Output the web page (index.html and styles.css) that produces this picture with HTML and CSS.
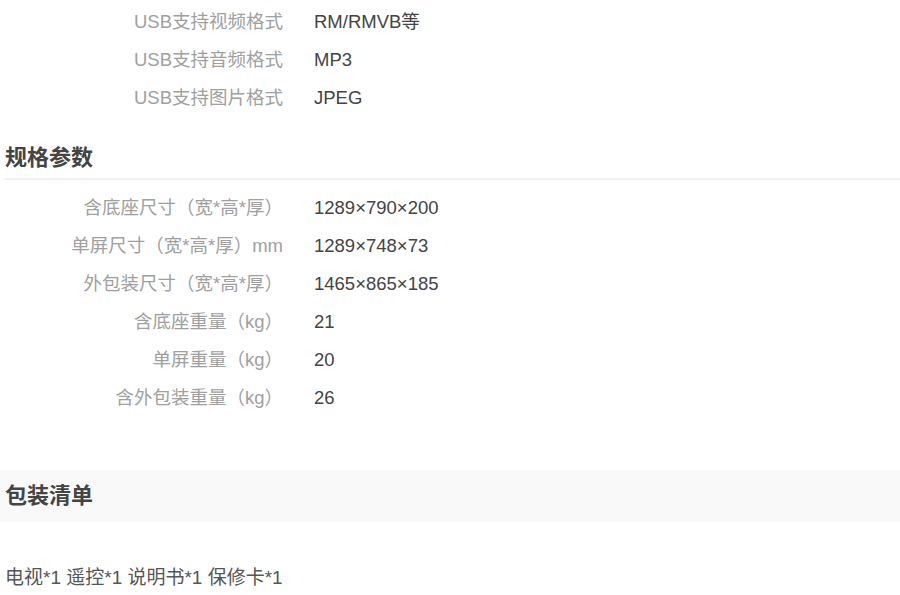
FILE: index.html
```html
<!DOCTYPE html>
<html>
<head lang="zh-CN">
    <meta charset="UTF-8">
    <title>规格参数</title>
    <link rel="stylesheet" href="styles.css">
</head>
<body>
<div class="spec">
    <dl class="rows first">
        <dt>USB支持视频格式</dt><dd>RM/RMVB等</dd>
        <dt>USB支持音频格式</dt><dd>MP3</dd>
        <dt>USB支持图片格式</dt><dd>JPEG</dd>
    </dl>
    <h3 class="title">规格参数</h3>
    <dl class="rows">
        <dt>含底座尺寸（宽*高*厚）</dt><dd>1289×790×200</dd>
        <dt>单屏尺寸（宽*高*厚）mm</dt><dd>1289×748×73</dd>
        <dt>外包装尺寸（宽*高*厚）</dt><dd>1465×865×185</dd>
        <dt>含底座重量（kg）</dt><dd>21</dd>
        <dt>单屏重量（kg）</dt><dd>20</dd>
        <dt>含外包装重量（kg）</dt><dd>26</dd>
    </dl>
    <h3 class="band">包装清单</h3>
    <p class="list">电视*1 遥控*1 说明书*1 保修卡*1</p>
</div>
</body>
</html>
```

FILE: styles.css
```css
*{
    margin: 0;
    padding: 0;
}
body{
    background: #fff;
    font-family: "Liberation Sans", "Noto Sans CJK SC", sans-serif;
    font-size: 18.5px;
}
.rows{
    display: grid;
    grid-template-columns: 283px auto;
    column-gap: 31px;
    line-height: 38px;
    padding-top: 9px;
}
.rows.first{
    padding-top: 3px;
}
.rows dt{
    text-align: right;
    color: #a0a0a0;
    white-space: nowrap;
}
.rows dd{
    color: #444;
}
.title{
    margin: 21px 0 0 5px;
    height: 40px;
    line-height: 40px;
    font-size: 22px;
    color: #444;
    border-bottom: 2px solid #f2f2f2;
}
.band{
    margin-top: 53px;
    height: 52px;
    line-height: 52px;
    padding-left: 5px;
    font-size: 22px;
    color: #444;
    background: #f9f9f9;
}
.list{
    margin-top: 43px;
    padding-left: 5px;
    line-height: 26px;
    font-size: 19px;
    color: #555;
}
```
